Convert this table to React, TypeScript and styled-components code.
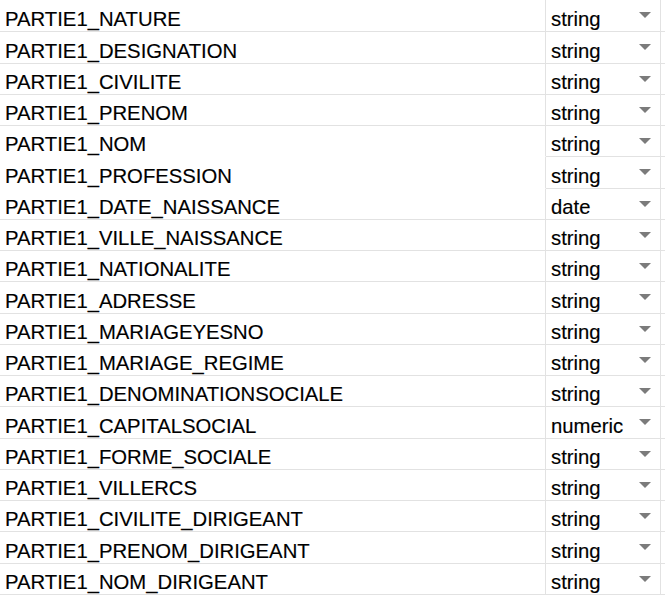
import React from "react";
import styled, { createGlobalStyle } from "styled-components";

const Global = createGlobalStyle`
  html, body { margin: 0; padding: 0; background: #fff; }
  body { font-family: "Liberation Sans", Arial, sans-serif; overflow: hidden; }
`;

const Sheet = styled.div`
  display: grid;
  grid-template-columns: 546px 115px 1fr;
  width: 665px;
`;

const Cell = styled.div<{ $h: number; $noLine?: boolean }>`
  height: ${(p) => p.$h - 1}px;
  border-bottom: 1px solid ${(p) => (p.$noLine ? "transparent" : "#e2e2e2")};
  display: flex;
  align-items: flex-end;
  box-sizing: content-box;
  font-size: 20.3px;
  line-height: 22px;
  color: #000;
  white-space: nowrap;
  overflow: hidden;
  -webkit-text-stroke: 0.15px #000;
`;

const NameCell = styled(Cell)`
  border-right: 1px solid #e2e2e2;
  padding-left: 5px;
`;

const TypeCell = styled(Cell)`
  border-right: 1px solid #e2e2e2;
  padding-left: 5px;
  padding-right: 9px;
  justify-content: space-between;
`;

const Filler = styled(Cell)``;

const Label = styled.span`
  display: block;
  padding-bottom: 1px;
`;

const Arrow = styled.span`
  align-self: flex-start;
  margin-top: 12px;
  width: 0;
  height: 0;
  border-left: 6px solid transparent;
  border-right: 6px solid transparent;
  border-top: 6px solid #7b7b7b;
  -webkit-text-stroke: 0;
`;

const rows: [string, string][] = [
  ["PARTIE1_NATURE", "string"],
  ["PARTIE1_DESIGNATION", "string"],
  ["PARTIE1_CIVILITE", "string"],
  ["PARTIE1_PRENOM", "string"],
  ["PARTIE1_NOM", "string"],
  ["PARTIE1_PROFESSION", "string"],
  ["PARTIE1_DATE_NAISSANCE", "date"],
  ["PARTIE1_VILLE_NAISSANCE", "string"],
  ["PARTIE1_NATIONALITE", "string"],
  ["PARTIE1_ADRESSE", "string"],
  ["PARTIE1_MARIAGEYESNO", "string"],
  ["PARTIE1_MARIAGE_REGIME", "string"],
  ["PARTIE1_DENOMINATIONSOCIALE", "string"],
  ["PARTIE1_CAPITALSOCIAL", "numeric"],
  ["PARTIE1_FORME_SOCIALE", "string"],
  ["PARTIE1_VILLERCS", "string"],
  ["PARTIE1_CIVILITE_DIRIGEANT", "string"],
  ["PARTIE1_PRENOM_DIRIGEANT", "string"],
  ["PARTIE1_NOM_DIRIGEANT", "string"],
];

const lineAt = (k: number) => (k < 0 ? -1 : Math.round(31.25 * (k + 1)));

export default function App() {
  return (
    <>
      <Global />
      <Sheet>
        {rows.map(([name, type], k) => {
          const h = lineAt(k) - lineAt(k - 1);
          const noLine = k === 4 || k === 5;
          return (
            <React.Fragment key={name}>
              <NameCell $h={h} $noLine={noLine}>
                <Label>{name}</Label>
              </NameCell>
              <TypeCell $h={h}>
                <Label>{type}</Label>
                <Arrow />
              </TypeCell>
              <Filler $h={h} />
            </React.Fragment>
          );
        })}
      </Sheet>
    </>
  );
}
